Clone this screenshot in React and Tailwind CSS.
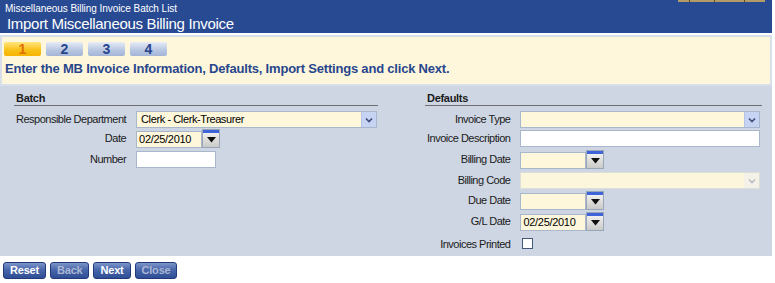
const font = "font-['Liberation_Sans',Arial,sans-serif]";

function Select({ value = "", disabled = false, width }) {
  return (
    <div
      className={`h-[17px] border flex items-center ${
        disabled ? "border-[#dcdfd8] bg-[#fbf6dc]" : "border-[#a9b7cc] bg-[#fff7dc]"
      }`}
      style={{ width }}
    >
      <span className="flex-1 pl-[4px] text-[11px] tracking-[-0.4px] leading-none text-black">{value}</span>
      <span
        className={`w-[15px] h-[15px] flex items-center justify-center ${
          disabled ? "bg-[#f3f1e8]" : "bg-[#c6d3f3] border-l border-[#b4c3e6]"
        }`}
      >
        <svg width="8" height="6" viewBox="0 0 8 6">
          <path
            d="M1 1.5 L4 4.5 L7 1.5"
            fill="none"
            stroke={disabled ? "#b9bcc4" : "#3b4e7a"}
            strokeWidth="1.6"
          />
        </svg>
      </span>
    </div>
  );
}

function DateField({ value = "" }) {
  return (
    <div className="flex items-start h-[18px]">
      <div className="mt-[1px] w-[66px] h-[17px] border border-[#a9b7cc] bg-[#fff7dc] pl-[2px] text-[11px] tracking-[-0.3px] leading-[15px] text-black">
        {value}
      </div>
      <div className="w-[18px] h-[19px] -mt-[1px] flex flex-col border border-[#9aa6b5] bg-[#e4e4e2]">
        <div className="h-[3px] bg-[#3f63d9]" />
        <div className="flex-1 flex items-center justify-center bg-[linear-gradient(#f0f0ee,#c9cbc8)]">
          <svg width="9" height="6" viewBox="0 0 9 6">
            <path d="M0 0 H9 L4.5 5.5 Z" fill="#111" />
          </svg>
        </div>
      </div>
    </div>
  );
}

function TextBox({ width }) {
  return <div className="h-[17px] border border-[#a9b7cc] bg-white" style={{ width }} />;
}

function Label({ children }) {
  return (
    <div className="text-right text-[11px] tracking-[-0.5px] leading-[17px] text-[#1a1a1a] whitespace-nowrap">
      {children}
    </div>
  );
}

function Tab({ n, active }) {
  return (
    <div
      className={`w-[37px] h-[14px] rounded-[2px] flex items-center justify-center text-[14px] font-bold leading-none ${
        active
          ? "bg-[linear-gradient(#ffe680,#f8c21a_55%,#f5b400)] text-[#e07000]"
          : "bg-[linear-gradient(#e6ecf7,#b7c5e0_60%,#a3b4d6)] text-[#27458c]"
      }`}
    >
      {n}
    </div>
  );
}

function Btn({ children, disabled }) {
  return (
    <button
      className={`h-[17px] px-[6px] rounded-[3px] border border-[#22397a] bg-[linear-gradient(#7d95c9,#4866aa_45%,#2f4e95)] text-[11px] font-bold leading-none tracking-[-0.2px] ${
        disabled ? "text-[#aab6d3]" : "text-white"
      }`}
    >
      {children}
    </button>
  );
}

export default function App() {
  return (
    <div className={`w-[775px] h-[283px] bg-white relative ${font}`}>
      {/* little tabs hanging off the top edge */}
      <div className="absolute top-0 left-[678px] w-[87px] h-[2px] bg-[#b39c68] flex">
        <div className="w-[12px] border-r border-[#5a4a2a]" />
        <div className="w-[25px] border-r border-[#5a4a2a]" />
        <div className="w-[30px] border-r border-[#5a4a2a]" />
      </div>

      <div className="w-[772px] h-[33px] bg-[#284a93] text-white pl-[5px] pt-[3px]">
        <div className="text-[10px] leading-[12px] tracking-[-0.05px]">Miscellaneous Billing Invoice Batch List</div>
        <div className="pl-[2px] text-[15px] leading-[18px] tracking-[-0.3px]">Import Miscellaneous Billing Invoice</div>
      </div>
      <div className="h-[2px] w-[772px] bg-white" />

      <div className="w-[772px] h-[51px] border-2 border-[#d8dfe9] bg-[#fff7dc] px-[1px] pt-[5px]">
        <div className="flex gap-[5px] ml-[1px]">
          <Tab n="1" active />
          <Tab n="2" />
          <Tab n="3" />
          <Tab n="4" />
        </div>
        <div className="mt-[5px] ml-[2px] text-[13px] font-bold text-[#27468c] leading-[16px] tracking-[-0.2px]">
          Enter the MB Invoice Information, Defaults, Import Settings and click Next.
        </div>
      </div>

      <div className="w-[772px] h-[170px] bg-[#ced6e3] flex pt-[6px]">
        <div className="ml-[14px] w-[364px]">
          <div className="text-[11px] font-bold leading-[13px] pl-[2px] text-[#1a1a1a] tracking-[-0.3px]">Batch</div>
          <div className="h-[1px] bg-[#6e6e6e]" />
          <div className="grid grid-cols-[auto_1fr] gap-x-[10px] grid-rows-[19px_21px_21px] mt-[5px] pl-[2px]">
            <div className="text-[11px] tracking-[-0.5px] leading-[17px] text-[#1a1a1a] whitespace-nowrap">
              Responsible Department
            </div>
            <Select value="Clerk - Clerk-Treasurer" width={241} />
            <Label>Date</Label>
            <DateField value="02/25/2010" />
            <Label>Number</Label>
            <TextBox width={80} />
          </div>
        </div>

        <div className="ml-[47px] w-[337px]">
          <div className="text-[11px] font-bold leading-[13px] pl-[2px] text-[#1a1a1a] tracking-[-0.3px]">Defaults</div>
          <div className="h-[1px] bg-[#6e6e6e]" />
          <div className="grid grid-cols-[auto_1fr] gap-x-[10px] grid-rows-[19px_21px_21px_20px_21px_23px_18px] mt-[5px] pl-[2px]">
            <Label>Invoice Type</Label>
            <Select width={240} />
            <Label>Invoice Description</Label>
            <TextBox width={240} />
            <Label>Billing Date</Label>
            <DateField />
            <Label>Billing Code</Label>
            <Select width={240} disabled />
            <Label>Due Date</Label>
            <DateField />
            <Label>G/L Date</Label>
            <DateField value="02/25/2010" />
            <Label>Invoices Printed</Label>
            <div className="pl-[2px] pt-[2px]">
              <div className="w-[11px] h-[11px] border border-[#44587a] bg-white" />
            </div>
          </div>
        </div>
      </div>

      <div className="flex gap-[4px] pl-[3px] pt-[6px]">
        <Btn>Reset</Btn>
        <Btn disabled>Back</Btn>
        <Btn>Next</Btn>
        <Btn disabled>Close</Btn>
      </div>
    </div>
  );
}
